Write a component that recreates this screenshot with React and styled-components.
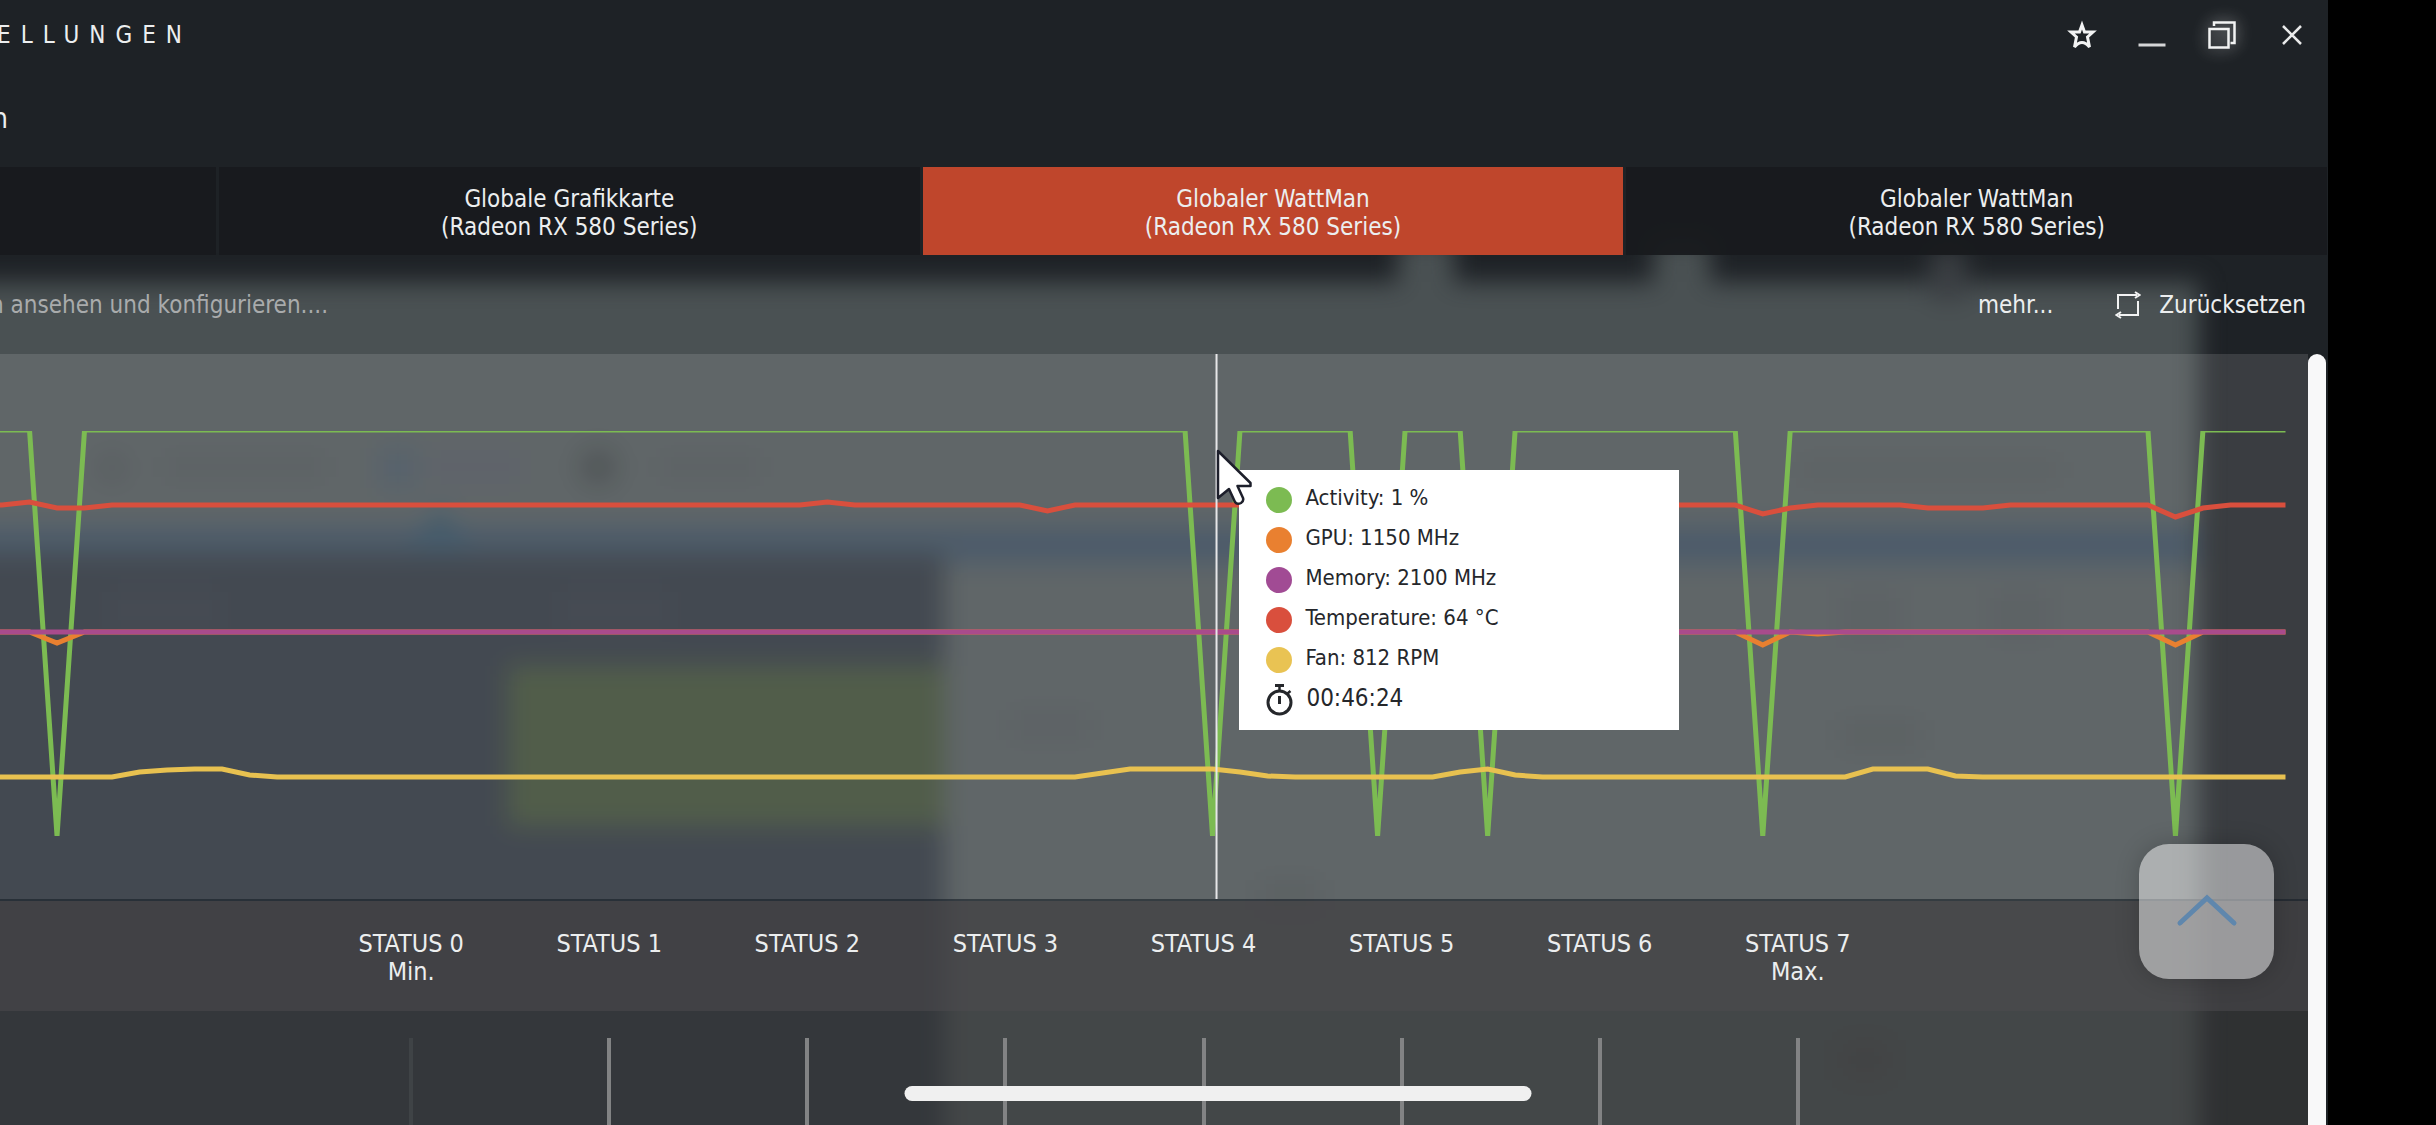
import styled, { createGlobalStyle } from "styled-components";

const GlobalStyle = createGlobalStyle`
  * {
    box-sizing: border-box;
  }
  body {
    margin: 0;
    background: #000;
    color: #eceeef;
    font-family: "DejaVu Sans Condensed", "Noto Sans", sans-serif;
    font-size: 24px;
    line-height: 28px;
  }
  button {
    padding: 0;
    border: none;
    background: none;
    color: inherit;
    font: inherit;
    cursor: pointer;
  }
`;

const Screen = styled.div`
  min-height: 100vh;
  padding-right: 108px;
  display: flex;
`;

const Window = styled.main`
  position: relative;
  z-index: 0;
  flex: 1;
  min-width: 0;
  display: flex;
  flex-direction: column;
  overflow: hidden;
  background: #1e2226;
`;

const BackdropSvg = styled.svg`
  position: absolute;
  inset: 0;
  z-index: -1;
  width: 100%;
  height: 100%;
`;

const TitleBar = styled.header`
  height: 70px;
  display: flex;
  align-items: center;
  justify-content: space-between;
`;

const Title = styled.h1`
  width: 192px;
  margin: 0;
  display: flex;
  justify-content: flex-end;
  overflow: hidden;
  font-size: 24px;
  font-weight: 400;
  letter-spacing: 10px;
`;

const WindowButtons = styled.div`
  padding-right: 1px;
  display: flex;
`;

const WindowButton = styled.button`
  width: 70px;
  height: 70px;
  display: grid;
  place-items: center;
  svg {
    filter: ${(props) => (props.$glow ? "drop-shadow(0 0 8px #fff9)" : "none")};
  }
`;

const SubHeader = styled.div`
  height: 97px;
  display: flex;
  align-items: center;
`;

const Crumb = styled.div`
  width: 8px;
  display: flex;
  justify-content: flex-end;
  overflow: hidden;
  font-size: 28px;
`;

const Tabs = styled.nav`
  padding-right: 1px;
  display: grid;
  grid-template-columns: 216px repeat(3, 1fr);
  gap: 3px;
`;

const Tab = styled.button`
  height: 88px;
  padding-top: 3px;
  background: ${(props) => (props.$active ? "#bf462c" : "rgba(24, 26, 30, 0.95)")};
`;

const TabLine = styled.span`
  display: block;
`;

const Toolbar = styled.div`
  height: 99px;
  padding-right: 22px;
  display: flex;
  align-items: center;
`;

const Hint = styled.div`
  width: 328px;
  display: flex;
  justify-content: flex-end;
  overflow: hidden;
  color: #a9abac;
  white-space: nowrap;
`;

const Actions = styled.div`
  margin-left: auto;
  display: flex;
  gap: 62px;
`;

const Action = styled.button`
  display: flex;
  align-items: center;
  gap: 18px;
`;

const Body = styled.div`
  flex: 1;
  padding-right: 2px;
  display: flex;
`;

const Content = styled.div`
  flex: 1;
  min-width: 0;
  display: flex;
  flex-direction: column;
`;

const Scrollbar = styled.div`
  width: 18px;
  border-radius: 9px 9px 0 0;
  background: #f8f8f9;
`;

const Chart = styled.section`
  position: relative;
  height: 547px;
  border-bottom: 2px solid rgba(24, 32, 40, 0.6);
  background: rgba(246, 248, 250, 0.13);
`;

const Plot = styled.svg`
  display: block;
  width: 100%;
  height: 545px;
`;

const Tooltip = styled.div`
  position: absolute;
  top: 116px;
  left: 53.7%;
  width: 440px;
  height: 260px;
  padding: 10px 27px;
  background: #fff;
  color: #25272b;
`;

const TooltipRow = styled.div`
  height: 40px;
  display: flex;
  align-items: center;
  gap: 13px;
  font-size: ${(props) => (props.$large ? "24px" : "22px")};
`;

const Dot = styled.span`
  width: 26px;
  height: 26px;
  border-radius: 50%;
  background: ${(props) => props.$color};
`;

const TooltipText = styled.span`
  padding-bottom: 4px;
`;

const Cursor = styled.svg`
  position: absolute;
  top: 94px;
  left: 52.7%;
`;

const StatusGrid = styled.div`
  display: grid;
  grid-template-columns: 312fr repeat(8, 198fr) 411fr;
`;

const StatusRow = styled(StatusGrid)`
  height: 110px;
  padding-top: 29px;
  background: rgba(72, 70, 73, 0.78);
`;

const TickRow = styled(StatusGrid)`
  flex: 1;
  min-height: 114px;
  padding-top: 27px;
  background: rgba(62, 62, 63, 0.53);
`;

const StatusCell = styled.div`
  grid-column: ${(props) => props.$column};
  display: flex;
  flex-direction: column;
  align-items: center;
  font-size: 25px;
`;

const Tick = styled.div`
  grid-column: ${(props) => props.$column};
  justify-self: center;
  width: 4px;
  background: ${(props) => (props.$faint ? "#3f4346" : "#828384")};
`;

const UpButton = styled.button`
  position: fixed;
  right: 162px;
  bottom: 146px;
  width: 135px;
  height: 135px;
  display: grid;
  place-items: center;
  border-radius: 30px;
  background: rgba(255, 255, 255, 0.48);
  box-shadow: 0 0 24px rgba(0, 0, 0, 0.2);
`;

const HomeBar = styled.div`
  position: fixed;
  bottom: 24px;
  left: 50%;
  width: 627px;
  height: 15px;
  border-radius: 8px;
  background: #f0f0f0;
  transform: translateX(-50%);
`;

const SAMPLES = 84;
const sampleX = (i) => 2 + 27.5 * i;

// every series is flat apart from the samples listed in `changes`
const series = [
    {
        name: "activity",
        color: "#7cbb52",
        width: 5,
        base: 76,
        changes: {2: 482, 44: 482, 50: 482, 54: 482, 64: 482, 79: 482}
    },
    {
        name: "temperature",
        color: "#d94f3d",
        width: 5,
        base: 151,
        changes: {1: 148, 2: 154, 3: 154, 30: 148, 38: 157, 64: 160, 65: 154, 70: 154, 71: 154, 72: 154, 79: 163, 80: 154}
    },
    {
        name: "gpu",
        color: "#e98030",
        width: 5,
        base: 278,
        changes: {2: 289, 64: 291, 66: 280, 79: 291}
    },
    {
        name: "memory",
        color: "#a94b8c",
        width: 5,
        base: 278,
        changes: {}
    },
    {
        name: "fan",
        color: "#e8c150",
        width: 5,
        base: 423,
        changes: {
            5: 418, 6: 416, 7: 415, 8: 415, 9: 421,
            40: 419, 41: 415, 42: 415, 43: 415, 44: 415, 45: 418, 46: 422,
            53: 418, 54: 415, 55: 421,
            68: 415, 69: 415, 70: 415, 71: 422
        }
    }
];

const toPoints = ({base, changes}) => {
    const points = [`-25,${base}`];
    for (let i = 0; i < SAMPLES; i++) {
        points.push(`${sampleX(i)},${changes[i] ?? base}`);
    }
    return points.join(" ");
};

const readings = [
    {color: "#7cbb52", text: "Activity: 1 %"},
    {color: "#e98030", text: "GPU: 1150 MHz"},
    {color: "#a14b94", text: "Memory: 2100 MHz"},
    {color: "#d94f3d", text: "Temperature: 64 °C"},
    {color: "#e9c353", text: "Fan: 812 RPM"}
];

const tabs = [
    {id: "grafik", lines: ["Globale Grafikkarte", "(Radeon RX 580 Series)"]},
    {id: "wattman-1", lines: ["Globaler WattMan", "(Radeon RX 580 Series)"], active: true},
    {id: "wattman-2", lines: ["Globaler WattMan", "(Radeon RX 580 Series)"]}
];

const states = [0, 1, 2, 3, 4, 5, 6, 7];
const stateNotes = {0: "Min.", 7: "Max."};

function Backdrop() {
    return (
        <BackdropSvg viewBox="0 0 2328 1125" preserveAspectRatio="none" aria-hidden="true">
            <defs>
                <filter
                    id="soft"
                    filterUnits="userSpaceOnUse"
                    x="-100"
                    y="100"
                    width="2528"
                    height="1200"
                    colorInterpolationFilters="sRGB"
                >
                    <feGaussianBlur stdDeviation="12" />
                </filter>
            </defs>
            <g filter="url(#soft)">
                <rect x="-80" y="282" width="2279" height="1000" fill="#4a5153" />
                <rect x="1398" y="240" width="56" height="60" fill="#4a5153" />
                <rect x="1654" y="240" width="56" height="60" fill="#4a5153" />
                <rect x="1930" y="250" width="36" height="50" fill="#3b3f43" />
                <rect x="-80" y="526" width="2279" height="38" fill="#344555" />
                <rect x="-80" y="554" width="1024" height="700" fill="#293039" />
                <rect x="508" y="666" width="436" height="160" fill="#394731" />
                <path d="M440 506l34 44h-68z" fill="#2b4558" />
                <circle cx="112" cy="468" r="14" fill="#43484c" />
                <rect x="165" y="456" width="160" height="22" fill="#474d50" />
                <rect x="380" y="448" width="36" height="40" fill="#3f4d59" />
                <rect x="430" y="450" width="90" height="34" fill="#494e56" />
                <circle cx="598" cy="467" r="20" fill="#3b4143" />
                <rect x="660" y="456" width="100" height="22" fill="#474d50" />
                <rect x="1800" y="460" width="260" height="20" fill="#474d4f" />
                <rect x="110" y="592" width="110" height="36" fill="#2c323b" />
                <rect x="560" y="592" width="110" height="36" fill="#2c323b" />
                <rect x="1010" y="710" width="80" height="30" fill="#474d50" />
                <rect x="1260" y="880" width="60" height="30" fill="#464c4e" />
                <rect x="1840" y="590" width="60" height="50" fill="#474d50" />
                <rect x="1990" y="590" width="60" height="50" fill="#474d50" />
                <rect x="1840" y="720" width="80" height="30" fill="#464c4e" />
                <rect x="1840" y="1040" width="50" height="40" fill="#474b4d" />
            </g>
        </BackdropSvg>
    );
}

function ChartPanel() {
    return (
        <Chart>
            <Plot viewBox="0 0 2307 545" preserveAspectRatio="none" role="img" aria-label="GPU-Verlauf">
                <clipPath id="plot-area">
                    <rect x="0" y="77" width="2286" height="405" />
                </clipPath>
                <g clipPath="url(#plot-area)">
                    {series.map((item) => (
                        <polyline
                            key={item.name}
                            points={toPoints(item)}
                            fill="none"
                            stroke={item.color}
                            strokeWidth={item.width}
                        />
                    ))}
                </g>
                <line x1="1216" y1="0" x2="1216" y2="545" stroke="#e6e6e8" strokeWidth="2" />
            </Plot>
            <Tooltip role="tooltip">
                {readings.map((reading) => (
                    <TooltipRow key={reading.text}>
                        <Dot $color={reading.color} />
                        <TooltipText>{reading.text}</TooltipText>
                    </TooltipRow>
                ))}
                <TooltipRow $large>
                    <svg width="27" height="32" viewBox="0 0 27 32" fill="none" stroke="#25272b">
                        <circle cx="13.5" cy="18.5" r="11.5" strokeWidth="3" />
                        <path d="M9 1.5h9M13.5 12v8" strokeWidth="3" />
                        <path d="M13.5 3v4M21.5 9.5l3-2.5" strokeWidth="2.5" />
                    </svg>
                    <TooltipText>00:46:24</TooltipText>
                </TooltipRow>
            </Tooltip>
            <Cursor width="38" height="58" viewBox="0 0 38 58">
                <path
                    d="M2 3V50L13 41L19 54Q21 57 25 55Q28 53 27 50L21.5 38H34.5V35Z"
                    fill="#fff"
                    stroke="#1d1f2b"
                    strokeWidth="2.5"
                    strokeLinejoin="round"
                />
            </Cursor>
        </Chart>
    );
}

export default function App() {
    return (
        <>
            <GlobalStyle />
            <Screen>
                <Window>
                    <Backdrop />
                    <TitleBar>
                        <Title>ELLUNGEN</Title>
                        <WindowButtons>
                            <WindowButton aria-label="Favorit">
                                <svg width="30" height="30" viewBox="0 0 30 30" fill="none" stroke="#f2f3f3" strokeWidth="3">
                                    <path d="M15 5L17.5 12H26L20.5 17L22.5 27Q15 18 7.5 27L9.5 17L4 12H12.5Z" />
                                </svg>
                            </WindowButton>
                            <WindowButton aria-label="Minimieren">
                                <svg width="28" height="28" viewBox="0 0 28 28" stroke="#d5d6d7" strokeWidth="3">
                                    <path d="M0.5 24H27.5" />
                                </svg>
                            </WindowButton>
                            <WindowButton aria-label="Verkleinern" $glow>
                                <svg width="28" height="28" viewBox="0 0 28 28" fill="none" stroke="#f2f3f3" strokeWidth="2.5">
                                    <path d="M1.5 8H20.5V26.5H1.5ZM6 5V1.5H26.5V22H22.5" />
                                </svg>
                            </WindowButton>
                            <WindowButton aria-label="Schließen">
                                <svg width="20" height="20" viewBox="0 0 20 20" stroke="#e9eaea" strokeWidth="2.5">
                                    <path d="M1 1L19 19M19 1L1 19" />
                                </svg>
                            </WindowButton>
                        </WindowButtons>
                    </TitleBar>
                    <SubHeader>
                        <Crumb>n</Crumb>
                    </SubHeader>
                    <Tabs>
                        <Tab aria-label="Globale Einstellungen" />
                        {tabs.map((tab) => (
                            <Tab key={tab.id} $active={tab.active}>
                                {tab.lines.map((line) => (
                                    <TabLine key={line}>{line}</TabLine>
                                ))}
                            </Tab>
                        ))}
                    </Tabs>
                    <Toolbar>
                        <Hint>n ansehen und konfigurieren....</Hint>
                        <Actions>
                            <Action>mehr...</Action>
                            <Action>
                                <svg width="26" height="28" viewBox="0 0 26 28" fill="none" stroke="#f2f3f3" strokeWidth="2">
                                    <path d="M3 18V4H22M20 1L24.5 4L20 7M23 10V24H4M6 21L1.5 24L6 27" />
                                </svg>
                                Zurücksetzen
                            </Action>
                        </Actions>
                    </Toolbar>
                    <Body>
                        <Content>
                            <ChartPanel />
                            <StatusRow>
                                {states.map((state) => (
                                    <StatusCell key={state} $column={state + 2}>
                                        <span>STATUS {state}</span>
                                        {stateNotes[state] && <span>{stateNotes[state]}</span>}
                                    </StatusCell>
                                ))}
                            </StatusRow>
                            <TickRow>
                                {states.map((state) => (
                                    <Tick key={state} $column={state + 2} $faint={state === 0} />
                                ))}
                            </TickRow>
                        </Content>
                        <Scrollbar />
                    </Body>
                </Window>
            </Screen>
            <UpButton aria-label="Nach oben">
                <svg width="62" height="38" viewBox="0 0 62 38" fill="none" stroke="#5f87ad" strokeWidth="5" strokeLinecap="round">
                    <path d="M4 30L31 5L58 30" />
                </svg>
            </UpButton>
            <HomeBar />
        </>
    );
}
